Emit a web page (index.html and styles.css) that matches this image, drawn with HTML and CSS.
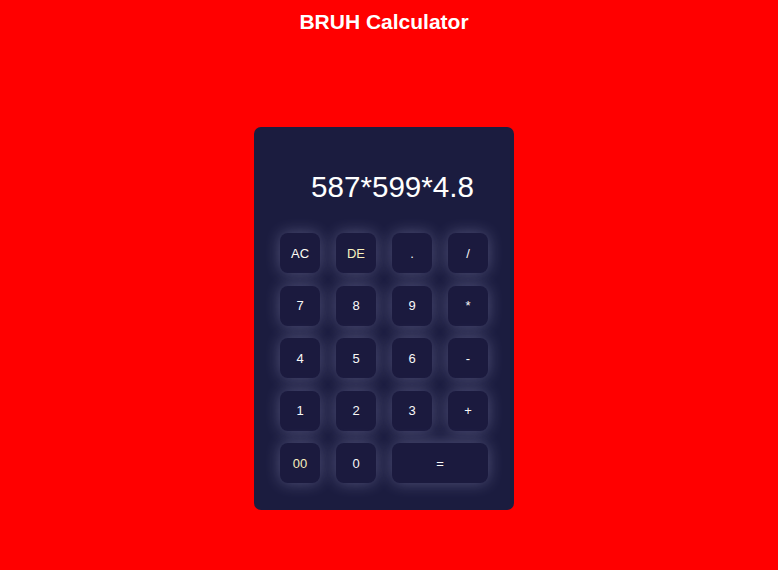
FILE: index.html
```html
<!DOCTYPE html>
<html>
<head>
<meta charset="utf-8">
<link rel="stylesheet" href="styles.css">
</head>
<body>
<div class="page">
  <h1 class="title">BRUH Calculator</h1>
  <div class="calc">
    <div class="display">587*599*4.8</div>
    <div class="keys">
      <button class="key key-ac">AC</button>
      <button class="key key-yellow">DE</button>
      <button class="key">.</button>
      <button class="key">/</button>
      <button class="key">7</button>
      <button class="key">8</button>
      <button class="key">9</button>
      <button class="key">*</button>
      <button class="key">4</button>
      <button class="key">5</button>
      <button class="key">6</button>
      <button class="key">-</button>
      <button class="key">1</button>
      <button class="key">2</button>
      <button class="key">3</button>
      <button class="key">+</button>
      <button class="key key-yellow">00</button>
      <button class="key">0</button>
      <button class="key key-wide">=</button>
    </div>
  </div>
</div>
</body>
</html>
```
FILE: styles.css
```css
html, body {
  margin: 0;
  padding: 0;
  background: #ff0000;
  font-family: "Liberation Sans", Arial, sans-serif;
}
.page {
  width: 768px;
  display: flex;
  flex-direction: column;
  align-items: center;
}
.title {
  margin: 10px 0 0 0;
  font-size: 21px;
  line-height: 24px;
  font-weight: bold;
  color: #ffffff;
}
.calc {
  margin-top: 93px;
  width: 260px;
  box-sizing: border-box;
  padding: 26px 26px 27px 26px;
  background: #1b1c3f;
  border-radius: 7px;
}
.display {
  height: 68px;
  line-height: 68px;
  margin-bottom: 12px;
  padding-right: 14px;
  text-align: right;
  font-size: 29.6px;
  color: #ffffff;
}
.keys {
  display: grid;
  grid-template-columns: repeat(4, 40px);
  grid-auto-rows: 40px;
  column-gap: 16px;
  row-gap: 12.5px;
}
.key {
  border: none;
  padding: 0;
  margin: 0;
  border-radius: 8px;
  background: #1b1a3e;
  color: #f8f8f8;
  font-family: "Liberation Sans", Arial, sans-serif;
  font-size: 13px;
  box-shadow: 0 0 16px rgba(200, 200, 245, 0.32);
}
.key-ac {
  color: #fdfdf4;
}
.key-yellow {
  color: #f7efbe;
}
.key-wide {
  grid-column: span 2;
}
```
